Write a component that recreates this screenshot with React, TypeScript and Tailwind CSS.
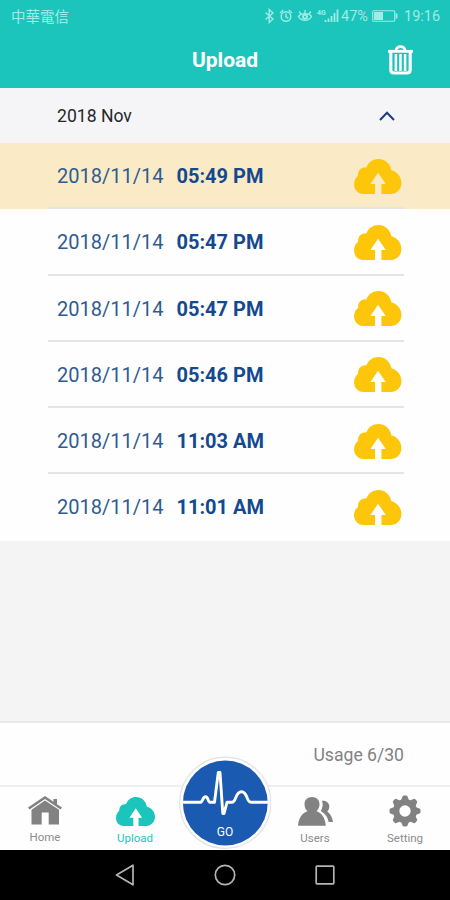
import React from "react";

interface IconProps {
	className?: string;
}

interface RecordRowProps {
	date: string;
	time: string;
	selected?: boolean;
}

const records = [
	{ date: "2018/11/14", time: "05:49 PM" },
	{ date: "2018/11/14", time: "05:47 PM" },
	{ date: "2018/11/14", time: "05:47 PM" },
	{ date: "2018/11/14", time: "05:46 PM" },
	{ date: "2018/11/14", time: "11:03 AM" },
	{ date: "2018/11/14", time: "11:01 AM" },
];

const CloudIcon = ({ className }: IconProps) => (
	<svg viewBox="0 0 142 105" className={className} fill="currentColor">
		<path d="M28 105C11 105 0 92 0 76C0 65 4 57 12 50C11 35 20 25 37 25C43 9 57 0 73 0C93 0 108 14 112 34C130 39 142 54 142 72C142 91 128 105 110 105H82V75H95L72 41L49 75H63V105Z" />
	</svg>
);

const TrashIcon = () => (
	<svg viewBox="0 0 25 30" className="w-[25px] h-[30px]" fill="none" stroke="white">
		<path d="M0 6.3H25" strokeWidth="2.8" />
		<path d="M8 5.5C8 0.3 17 0.3 17 5.5" strokeWidth="2.6" />
		<path d="M2.8 7V24.7Q2.8 28 6.1 28H18.9Q22.2 28 22.2 24.7V7" strokeWidth="3.1" />
		<path d="M7.9 9V26M12.5 9V26M17.1 9V26" strokeWidth="2.5" />
	</svg>
);

const StatusBar = () => (
	<div className="h-8 flex items-center text-[#a0ebe4] pl-[11px] pr-[10px]">
		<span className="flex-1 text-[14.5px] leading-none font-['Noto_Sans_CJK_TC',sans-serif]">中華電信</span>
		{/* bluetooth, alarm, eye comfort, signal */}
		<svg viewBox="0 0 78 18" className="w-[78px] h-[18px] mr-[2px]" fill="none" stroke="currentColor" strokeWidth="1.4">
			<path d="M4.5 5.5L12 12L8.2 15.5V2.5L12 6L4.5 12.5" />
			<circle cx="25" cy="9.5" r="4.8" />
			<path d="M25 6.5V9.8L27.3 11.2M19 6L22.3 3M31 6L27.7 3" />
			<path d="M37.5 9.5C40 5.6 48 5.6 50.5 9.5C48 14.5 40 14.5 37.5 9.5Z" />
			<circle cx="44" cy="9.8" r="2" strokeWidth="2" />
			<path d="M44 6.5V3M40 7L38.2 4.5M48 7L49.8 4.5" />
			<path d="M64.5 15V13M67.5 15V11.5M70.5 15V9M73.5 15V6M76.5 15V2.5" strokeWidth="1.8" />
			<text x="56" y="8" fontSize="7" fontWeight="700" fill="currentColor" stroke="none" fontFamily="Roboto, sans-serif">4G</text>
		</svg>
		<span className="text-[14.5px] leading-none w-[28px] pt-[2px]">47%</span>
		<svg viewBox="0 0 27 14" className="w-[27px] h-[14px] ml-[3px]" fill="none" stroke="currentColor">
			<rect x="0.7" y="1.7" width="22" height="10.6" rx="1" strokeWidth="1.1" />
			<rect x="2" y="3" width="9" height="8" fill="currentColor" stroke="none" />
			<path d="M24.5 4.5V9.5" strokeWidth="1.8" />
		</svg>
		<span className="text-[14.5px] leading-none ml-[5px] w-[36px] pt-[2px] whitespace-nowrap">19:16</span>
	</div>
);

const RecordRow = ({ date, time, selected }: RecordRowProps) => (
	<li className={selected ? "h-[66.25px] bg-[#faebc6] pl-12 pr-[46px]" : "h-[66.25px] bg-[#fefefe] pl-12 pr-[46px] group"}>
		<div className="h-full flex items-center pt-[2px] pl-[9px] pr-[2.5px] border-b-2 border-[#e5e5e8] group-last:border-transparent text-[20px] text-[#14498f]">
			<span className="w-[119.5px] text-[#2f5c90]">{date}</span>
			<span className="flex-1 font-bold">{time}</span>
			<CloudIcon className="w-[47.5px] h-[35px] text-[#fdc60b]" />
		</div>
	</li>
);

const HomeIcon = () => (
	<svg viewBox="0 0 34 29" className="w-[34px] h-[29px]" fill="#828282">
		<path d="M0 11.5L17 0L25.5 5.8V3H29V8.2L34 11.5L32.5 13.5L17 3L1.5 13.5Z" />
		<path d="M3.5 13.8L17 4.5L31 13.8V28.5H20.7V16.5H13.7V28.5H3.5Z" />
	</svg>
);

const UsersIcon = () => (
	<svg viewBox="0 0 35 29" className="w-[35px] h-[29px]" fill="#828282">
		<path d="M14 0C18.5 0 21.5 3 21.5 7.2C21.5 10.2 20.3 12.5 18.5 14.2C23.5 16 27 20 27.8 28.8H0C.8 20 4.5 16 9.5 14.2C7.7 12.5 6.5 10.2 6.5 7.2C6.5 3 9.5 0 14 0Z" />
		<path d="M24 4C28 3.2 31.3 6 31.3 9.5C31.3 11.8 30.5 13.2 29.3 14.5C32.5 17 34.2 20 35 25H30.7C29.5 20 27.5 17 22.8 14C24.8 11 25.2 7 24 4Z" />
	</svg>
);

const GearIcon = () => (
	<svg viewBox="-16 -16 32 32" className="w-8 h-8">
		<g fill="#828282">
			<circle r="12" />
			{[0, 45, 90, 135, 180, 225, 270, 315].map((angle) => (
				<path key={angle} transform={`rotate(${angle})`} d="M-3.8 -11L-2.5 -14.6Q-2 -15.5 -1 -15.5H1Q2 -15.5 2.5 -14.6L3.8 -11Z" />
			))}
		</g>
		<circle r="5.7" fill="white" />
	</svg>
);

interface NavItemProps {
	label: string;
	className: string;
	children: React.ReactNode;
}

const NavItem = ({ label, className, children }: NavItemProps) => (
	<a className={`w-[90px] flex flex-col items-center text-[11.5px] ${className}`}>
		<span className="h-8 flex items-center">{children}</span>
		<span className="leading-[14px] mt-1">{label}</span>
	</a>
);

const GoButton = () => (
	<button className="absolute left-[179px] -top-[31px] w-[92px] h-[94px] overflow-hidden">
		<svg viewBox="0 0 92 94" className="w-[92px] h-[94px]">
			<circle cx="46.3" cy="46.8" r="45.6" fill="#fefefe" stroke="#e2e2e3" strokeWidth="1.2" />
			<circle cx="46.3" cy="47" r="42.4" fill="#1a5ab0" />
			<path
				d="M3.5 46.3H21C24 46.3 23.5 40.8 26.5 40.8C29.5 40.8 28.8 46.3 31 46.3H35.5L39.3 16.5H41L43.8 57.5H45L48 46.3H53C57.5 46.3 56 35.8 62.5 35.8C69 35.8 67 46.3 72 46.3H89"
				fill="none"
				stroke="white"
				strokeWidth="2.9"
				strokeLinejoin="round"
			/>
			<text x="46" y="79.5" textAnchor="middle" fontSize="12" fill="white" fontFamily="Roboto, sans-serif">GO</text>
		</svg>
	</button>
);

const App = () => (
	<div className="w-[450px] h-[900px] overflow-hidden flex flex-col bg-[#f4f4f4] font-['Roboto',sans-serif]">
		<header className="h-[88px] bg-[#1cc5bc] shrink-0">
			<StatusBar />
			<div className="grid grid-cols-[1fr_auto_1fr] items-center h-[56px] pr-[37px] pl-[37px]">
				<h1 className="col-start-2 pt-[2px] text-[21px] font-bold text-white">Upload</h1>
				<div className="flex justify-end">
					<TrashIcon />
				</div>
			</div>
		</header>

		{/* month group */}
		<div className="h-[55px] shrink-0 flex items-center justify-between pt-px pl-[57px] pr-[55px] bg-[#f5f5f8] text-[17.6px] text-[#27272a]">
			<span>2018 Nov</span>
			<svg viewBox="0 0 16 10" className="w-4 h-[10px] mb-px" fill="none" stroke="#1d3c80" strokeWidth="2">
				<path d="M1 9L8 1.8L15 9" />
			</svg>
		</div>
		<ul className="shrink-0">
			{records.map((record, i) => (
				<RecordRow key={i} date={record.date} time={record.time} selected={i === 0} />
			))}
		</ul>

		<div className="flex-1" />

		<div className="h-[64px] shrink-0 flex items-center justify-end pt-[2px] pr-[46px] bg-[#fefefe] border-t-2 border-[#e9e9e9] text-[17.6px] text-[#828282]">
			Usage 6/30
		</div>
		<nav className="relative h-[65px] shrink-0 flex pt-[8px] bg-[#fefefe] border-t-2 border-[#f0f0f0]">
			<NavItem label="Home" className="-mt-px text-[#8c8c8c]">
				<HomeIcon />
			</NavItem>
			<NavItem label="Upload" className="text-[#1cc5bc]">
				<CloudIcon className="w-[39px] h-[29px]" />
			</NavItem>
			<div className="w-[90px]" />
			<NavItem label="Users" className="text-[#8c8c8c]">
				<UsersIcon />
			</NavItem>
			<NavItem label="Setting" className="text-[#8c8c8c]">
				<GearIcon />
			</NavItem>
			<GoButton />
		</nav>

		{/* android buttons */}
		<footer className="h-[50px] shrink-0 bg-black flex items-center justify-center gap-[80px]">
			<svg viewBox="0 0 20 22" className="w-5 h-[22px] mr-[-1px]" fill="none" stroke="#b4b4b4" strokeWidth="1.7" strokeLinejoin="round">
				<path d="M18 1.2V20.8L1.5 11Z" />
			</svg>
			<svg viewBox="0 0 22 22" className="w-[22px] h-[22px]" fill="none" stroke="#b4b4b4" strokeWidth="1.7">
				<circle cx="11" cy="11" r="9.7" />
			</svg>
			<svg viewBox="0 0 20 20" className="w-5 h-5 ml-[-1px]" fill="none" stroke="#b4b4b4" strokeWidth="1.7">
				<rect x="1.2" y="1.2" width="17.6" height="17.6" rx="0.8" />
			</svg>
		</footer>
	</div>
);

export default App;
